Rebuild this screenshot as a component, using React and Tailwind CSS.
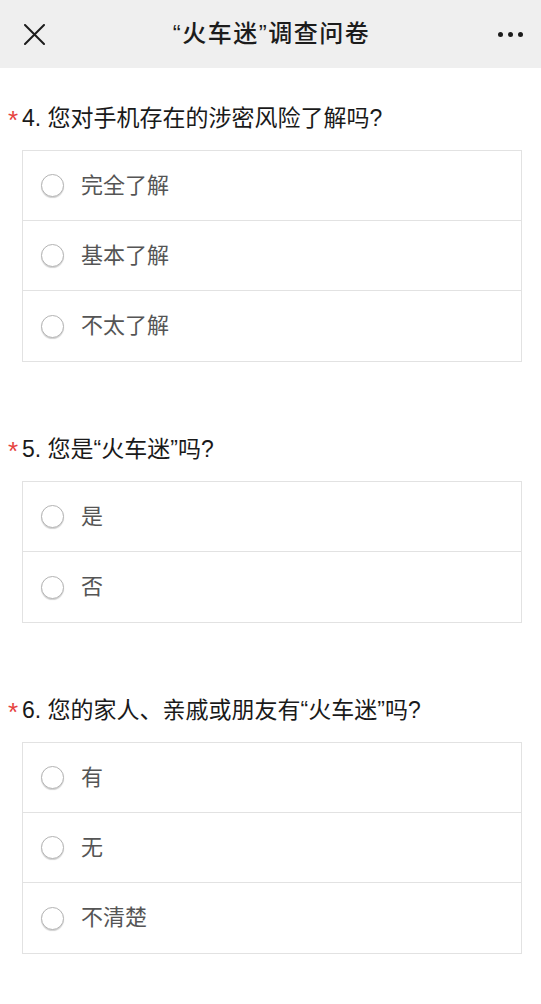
import React from "react";

const questions = [
  { no: 4, title: "您对手机存在的涉密风险了解吗?", options: ["完全了解", "基本了解", "不太了解"] },
  { no: 5, title: "您是“火车迷”吗?", options: ["是", "否"] },
  { no: 6, title: "您的家人、亲戚或朋友有“火车迷”吗?", options: ["有", "无", "不清楚"] },
];

function Radio() {
  return (
    <span className="w-[23px] h-[23px] rounded-full border border-[#b4b4b4] bg-white shadow-[0_1px_1px_rgba(0,0,0,0.18)] shrink-0" />
  );
}

export default function App() {
  return (
    <div
      className="w-[541px] min-h-[1004px] bg-white"
      style={{ fontFamily: '"Liberation Sans", "Noto Sans CJK SC", sans-serif' }}
    >
      {/* top bar */}
      <div className="h-[68px] bg-[#efefef] flex items-center justify-between pl-[24px] pr-[18px]">
        <svg width="21" height="21" viewBox="0 0 21 21" className="shrink-0">
          <path d="M1 1 L20 20 M20 1 L1 20" stroke="#1c1c1c" strokeWidth="2" strokeLinecap="round" />
        </svg>
        <h1 className="text-[24px] font-medium text-[#1c1c1c] tracking-[1.5px] leading-none">
          “火车迷”调查问卷
        </h1>
        <div className="flex items-center gap-[5px]">
          <span className="w-[5px] h-[5px] rounded-full bg-[#1c1c1c]" />
          <span className="w-[5px] h-[5px] rounded-full bg-[#1c1c1c]" />
          <span className="w-[5px] h-[5px] rounded-full bg-[#1c1c1c]" />
        </div>
      </div>

      <div className="pt-[35px] pb-[40px]">
        {questions.map((q, i) => (
          <section key={q.no} className={i === 0 ? "" : "mt-[72px]"}>
            <div className="h-[30px] flex items-center pl-[8px]">
              <span className="w-[14px] h-[30px] text-[#e64340] text-[26px] leading-none pt-[4px]">*</span>
              <span className="text-[23px] text-[#1a1a1a] leading-none">
                {q.no}. {q.title}
              </span>
            </div>
            <div className="ml-[22px] mr-[19px] mt-[17px] border border-[#e2e2e2] divide-y divide-[#e2e2e2]">
              {q.options.map((opt) => (
                <div key={opt} className="h-[70px] flex items-center pl-[18px] gap-[17px]">
                  <Radio />
                  <span className="text-[22px] text-[#555555] leading-none">{opt}</span>
                </div>
              ))}
            </div>
          </section>
        ))}
      </div>
    </div>
  );
}
